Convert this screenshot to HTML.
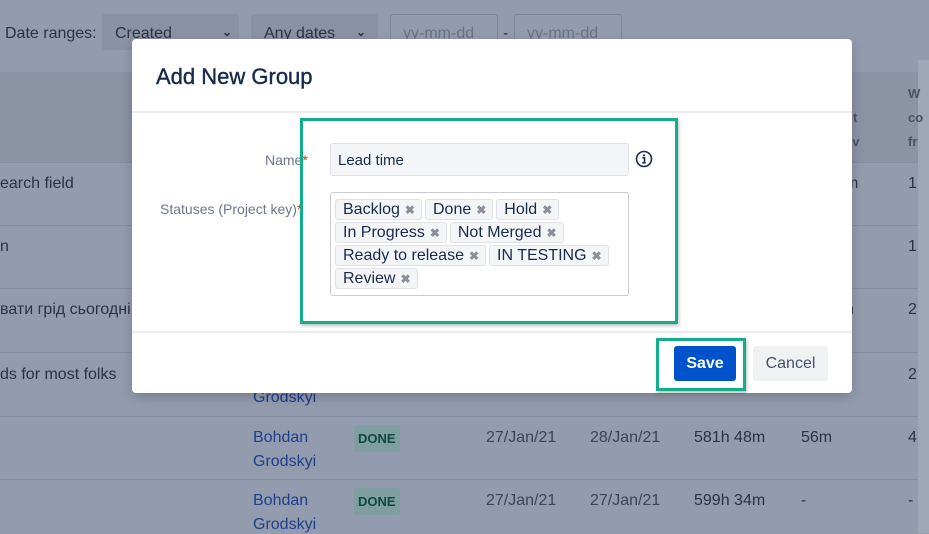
<!DOCTYPE html>
<html><head><meta charset="utf-8"><style>
*{box-sizing:border-box;margin:0;padding:0}
body{width:929px;height:533px;overflow:hidden;background:#939cae;font-family:"Liberation Sans",sans-serif;position:relative;color:#2e3444}
.a{position:absolute;white-space:nowrap}
.bg{font-size:16px;color:#2c3242}
.ln{position:absolute;left:0;width:918px;height:1px;background:#858ea0}
.lnk{color:#1e3f8a}
.done{position:absolute;background:#7f9ea0;color:#0e4a3a;font-weight:bold;font-size:13px;padding:6px 4px;border-radius:3px}
.modal{position:absolute;left:132px;top:39px;width:720px;height:354px;background:#fff;border-radius:4px;box-shadow:0 4px 12px rgba(0,0,0,.2)}
.tag{display:inline-block;background:#f4f5f7;border:1px solid #dfe1e6;border-radius:3px;font-size:16px;color:#172b4d;padding:0 6px 0 7px;height:21px;line-height:19px;margin:0 3px 2px 0}
.tag b{color:#8a8f99;font-size:12px;margin-left:5px}
.chev{position:absolute;font-size:12px;font-weight:bold;color:#2c3242}
</style></head><body>
<div class="a bg" style="left:5px;top:25px">Date ranges:</div>
<div class="a" style="left:102px;top:14px;width:137px;height:36px;background:#8a93a5;border-radius:3px"></div>
<div class="a bg" style="left:115px;top:25px">Created</div>
<div class="chev" style="left:222px;top:25px">&#8964;</div>
<div class="a" style="left:251px;top:14px;width:127px;height:36px;background:#8a93a5;border-radius:3px"></div>
<div class="a bg" style="left:264px;top:25px">Any dates</div>
<div class="chev" style="left:356px;top:25px">&#8964;</div>
<div class="a" style="left:390px;top:14px;width:108px;height:36px;border:1px solid #7d8698;border-radius:3px"></div>
<div class="a bg" style="left:403px;top:25px;color:#6a7284">yy-mm-dd</div>
<div class="a bg" style="left:503px;top:25px">-</div>
<div class="a" style="left:514px;top:14px;width:108px;height:36px;border:1px solid #7d8698;border-radius:3px"></div>
<div class="a bg" style="left:527px;top:25px;color:#6a7284">yy-mm-dd</div>
<div class="a" style="left:0;top:72px;width:918px;height:90px;background:#8b93a5"></div>
<div class="a" style="left:918px;top:60px;width:11px;height:473px;background:#a0a8b8"></div>
<div class="a" style="left:845px;top:110px;font-size:13px;font-weight:bold;color:#4a5264">nt</div>
<div class="a" style="left:845px;top:134px;font-size:13px;font-weight:bold;color:#4a5264">ev</div>
<div class="a" style="left:908px;top:86px;font-size:13px;font-weight:bold;color:#4a5264">W</div>
<div class="a" style="left:908px;top:110px;font-size:13px;font-weight:bold;color:#4a5264">co</div>
<div class="a" style="left:908px;top:134px;font-size:13px;font-weight:bold;color:#4a5264">fr</div>
<div class="ln" style="top:162px"></div><div class="ln" style="top:225px"></div><div class="ln" style="top:288px"></div><div class="ln" style="top:352px"></div><div class="ln" style="top:416px"></div><div class="ln" style="top:479px"></div>
<div class="a bg" style="left:0;top:175px">earch field</div><div class="a bg" style="left:845px;top:175px">m</div><div class="a bg" style="left:908px;top:175px">1</div>
<div class="a bg" style="left:0;top:238px">n</div><div class="a bg" style="left:908px;top:238px">1</div>
<div class="a bg" style="left:0;top:301px">вати грід сьогодні</div><div class="a bg" style="left:845px;top:301px">n</div><div class="a bg" style="left:908px;top:301px">2</div>
<div class="a bg" style="left:0;top:366px">ds for most folks</div><div class="a bg" style="left:908px;top:366px">2</div>
<div class="a bg lnk" style="left:253px;top:389px">Grodskyi</div>
<div class="a bg lnk" style="left:253px;top:429px">Bohdan</div><div class="a bg lnk" style="left:253px;top:453px">Grodskyi</div>
<div class="done" style="left:354px;top:425px">DONE</div>
<div class="a bg" style="left:486px;top:429px;color:#3d4454">27/Jan/21</div><div class="a bg" style="left:590px;top:429px;color:#3d4454">28/Jan/21</div>
<div class="a bg" style="left:694px;top:429px">581h 48m</div><div class="a bg" style="left:801px;top:429px">56m</div><div class="a bg" style="left:908px;top:429px">4</div>
<div class="a bg lnk" style="left:253px;top:492px">Bohdan</div><div class="a bg lnk" style="left:253px;top:516px">Grodskyi</div>
<div class="done" style="left:354px;top:488px">DONE</div>
<div class="a bg" style="left:486px;top:492px;color:#3d4454">27/Jan/21</div><div class="a bg" style="left:590px;top:492px;color:#3d4454">27/Jan/21</div>
<div class="a bg" style="left:694px;top:492px">599h 34m</div><div class="a bg" style="left:801px;top:492px">-</div><div class="a bg" style="left:908px;top:492px">-</div>

<div class="modal">
 <div class="a" style="left:24px;top:25px;font-size:22px;color:#172b4d;-webkit-text-stroke:0.4px #172b4d">Add New Group</div>
 <div class="a" style="left:0;top:72px;width:720px;height:2px;background:#ebecf0"></div>
 <div class="a" style="left:0;top:292px;width:720px;height:2px;background:#ebecf0"></div>
 <div class="a" style="left:133px;top:113px;font-size:14px;color:#6b778c">Name<span style="color:#de350b">*</span></div>
 <div class="a" style="left:28px;top:162px;font-size:14px;color:#6b778c">Statuses (Project key)<span style="color:#de350b">*</span></div>
 <div class="a" style="left:198px;top:104px;width:299px;height:33px;background:#f4f5f7;border:1px solid #dfe1e6;border-radius:3px;font-size:15px;color:#172b4d;padding:8px 7px">Lead time</div>
 <svg class="a" style="left:503px;top:111px" width="18" height="18" viewBox="0 0 18 18"><circle cx="9" cy="9" r="7.5" fill="none" stroke="#172b4d" stroke-width="1.6"/><circle cx="9" cy="5.3" r="1.1" fill="#172b4d"/><path d="M7.5 7.8h2v5M7.3 12.8h3.4" stroke="#172b4d" stroke-width="1.6" fill="none"/></svg>
 <div class="a" style="left:198px;top:153px;width:299px;height:104px;border:1px solid #c9ccd4;border-radius:3px;padding:6px 4px;white-space:normal;line-height:0">
  <span class="tag">Backlog<b>✖</b></span><span class="tag">Done<b>✖</b></span><span class="tag">Hold<b>✖</b></span><span class="tag">In Progress<b>✖</b></span><span class="tag">Not Merged<b>✖</b></span><span class="tag">Ready to release<b>✖</b></span><span class="tag">IN TESTING<b>✖</b></span><span class="tag">Review<b>✖</b></span>
 </div>
 <div class="a" style="left:542px;top:307px;width:62px;height:35px;background:#0052cc;border-radius:3px;color:#fff;font-weight:bold;font-size:16px;text-align:center;line-height:35px">Save</div>
 <div class="a" style="left:621px;top:307px;width:75px;height:35px;background:#f0f1f3;border-radius:3px;color:#42526e;font-size:16px;text-align:center;line-height:35px">Cancel</div>
</div>
<div class="a" style="left:300px;top:118px;width:378px;height:206px;border:3px solid #14ad8c;box-shadow:1px 2px 3px rgba(0,0,0,.25)"></div>
<div class="a" style="left:656px;top:338px;width:90px;height:53px;border:3px solid #14ad8c;box-shadow:1px 2px 3px rgba(0,0,0,.25)"></div>
</body></html>
